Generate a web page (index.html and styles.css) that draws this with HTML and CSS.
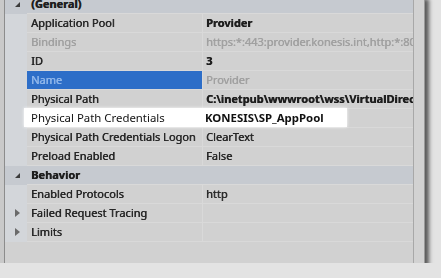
FILE: index.html
```html
<!DOCTYPE html>
<html lang="en-US">
<head>
<title>Application Pool Properties</title>
<link rel="stylesheet" href="styles.css">
</head>
<body>
<div class="panel">
  <div class="edge"></div>
  <div class="grid">
    <div class="rows">
      <div class="row cat"><span class="gut"><span class="open"></span></span><span class="name">(General)</span><span class="val"></span></div>
      <div class="row"><span class="gut"></span><span class="name">Application Pool</span><span class="val bold">Provider</span></div>
      <div class="row dim"><span class="gut"></span><span class="name">Bindings</span><span class="val">https:*:443:provider.konesis.int,http:*:80</span></div>
      <div class="row"><span class="gut"></span><span class="name">ID</span><span class="val bold">3</span></div>
      <div class="row sel"><span class="gut"></span><span class="name">Name</span><span class="val">Provider</span></div>
      <div class="row"><span class="gut"></span><span class="name">Physical Path</span><span class="val bold">C:\inetpub\wwwroot\wss\VirtualDirectories\provider.konesis.int443</span></div>
      <div class="row"><span class="gut"></span><span class="name"></span><span class="val"></span></div>
      <div class="row"><span class="gut"></span><span class="name">Physical Path Credentials Logon</span><span class="val">ClearText</span></div>
      <div class="row"><span class="gut"></span><span class="name">Preload Enabled</span><span class="val">False</span></div>
      <div class="row cat"><span class="gut"><span class="open"></span></span><span class="name">Behavior</span><span class="val"></span></div>
      <div class="row"><span class="gut"></span><span class="name">Enabled Protocols</span><span class="val">http</span></div>
      <div class="row"><span class="gut"><span class="shut"></span></span><span class="name">Failed Request Tracing</span><span class="val"></span></div>
      <div class="row"><span class="gut"><span class="shut"></span></span><span class="name">Limits</span><span class="val"></span></div>
    </div>
    <div class="lens">
      <span class="lens-name">Physical Path Credentials</span>
      <span class="lens-val">KONESIS\SP_AppPool</span>
    </div>
  </div>
  <div class="scroll"></div>
</div>
</body>
</html>
```
FILE: styles.css
```css
body {
	margin: 0;
	background-color: #e3e3e3;
	overflow: hidden;
	font-family: "Noto Sans", "Open Sans", sans-serif;
	}
.panel {
	display: flex;
	width: 425px;
	height: 268px;
	margin-top: -5px;
	background-color: #cfcfcf;
	box-shadow: 4px 4px 4px rgba(0, 0, 0, 0.6);
	}
.edge {
	width: 4px;
	background-color: #c9c9c9;
	border-right: 1px solid #8c8c8c;
	}
.grid {
	position: relative;
	width: 408px;
	background-color: #d1d1d1;
	}
.rows {
	filter: blur(0.6px);
	}
.row {
	display: flex;
	height: 19px;
	font-size: 11px;
	line-height: 18px;
	color: #262626;
	text-shadow: 0.4px 0 0 currentColor;
	}
.gut {
	position: relative;
	width: 22px;
	background-color: #d3d6da;
	}
.name {
	width: 171px;
	padding-left: 4px;
	border-bottom: 1px solid #d9d9d9;
	border-right: 1px solid #d9d9d9;
	white-space: nowrap;
	overflow: hidden;
	}
.val {
	flex: 1;
	padding-left: 3px;
	border-bottom: 1px solid #d9d9d9;
	white-space: nowrap;
	overflow: hidden;
	}
.bold {
	font-weight: bold;
	color: #1e1e1e;
	}
.dim .name, .dim .val, .sel .val {
	color: #a0a0a0;
	}
.sel .name {
	background-color: #2d6ec8;
	color: #8fb6ea;
	}
.cat .name, .cat .val {
	background-color: #c6cad0;
	font-weight: bold;
	color: #1e1e1e;
	border-right: none;
	}
.cat .gut {
	background-color: #c6cad0;
	}
.open {
	position: absolute;
	left: 10px;
	top: 7px;
	width: 0;
	height: 0;
	border-left: 5px solid transparent;
	border-bottom: 5px solid #3c3c3c;
	}
.shut {
	position: absolute;
	left: 10px;
	top: 5px;
	width: 0;
	height: 0;
	border-top: 4px solid transparent;
	border-bottom: 4px solid transparent;
	border-left: 5px solid #6a6a6a;
	}
.lens {
	position: absolute;
	left: 19px;
	top: 113px;
	width: 323px;
	height: 19px;
	display: flex;
	align-items: center;
	background-color: #ffffff;
	box-shadow: 0 0 3px rgba(255, 255, 255, 0.9);
	font-size: 11.4px;
	color: #111111;
	}
.lens-name {
	width: 174px;
	padding-left: 7px;
	}
.lens-val {
	font-weight: bold;
	}
.scroll {
	width: 10px;
	background-color: #d2d2d2;
	border-left: 1px solid #a8a8a8;
	border-right: 1px solid #9a9a9a;
	}
```
